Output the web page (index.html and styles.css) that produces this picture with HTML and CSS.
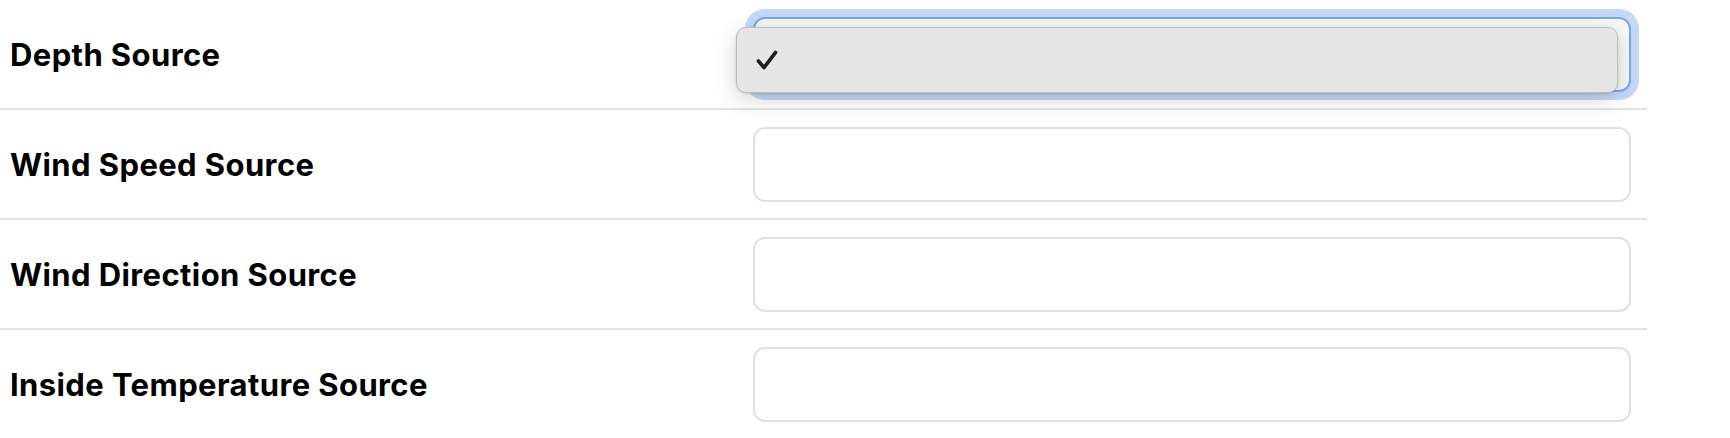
FILE: index.html
```html
<!DOCTYPE html>
<html>
<head>
<meta charset="utf-8">
<link rel="stylesheet" href="styles.css">
</head>
<body>
<div class="list">
  <div class="row">
    <div class="label">Depth Source</div>
    <div class="select is-open">
      <div class="popup">
        <svg class="check" width="22" height="22" viewBox="0 0 22 22"><path d="M2.4 12 L8 18.6 L19.6 3.4" fill="none" stroke="#1e1e1e" stroke-width="3.6" stroke-linecap="round" stroke-linejoin="round"/></svg>
      </div>
    </div>
  </div>
  <div class="row">
    <div class="label">Wind Speed Source</div>
    <div class="select"></div>
  </div>
  <div class="row">
    <div class="label">Wind Direction Source</div>
    <div class="select"></div>
  </div>
  <div class="row">
    <div class="label">Inside Temperature Source</div>
    <div class="select"></div>
  </div>
</div>
</body>
</html>
```
FILE: styles.css
```css
html, body {
  margin: 0;
  padding: 0;
  background: #fff;
}
body {
  font-family: "Inter", "Liberation Sans", sans-serif;
  color: #000;
}
.list {
  width: 1647px;
}
.row {
  display: flex;
  align-items: center;
  height: 108px;
  padding: 0 16px 0 10px;
  border-bottom: 2px solid #e0e2e5;
}
.row:last-child {
  border-bottom: none;
}
.label {
  flex: 1;
  font-size: 31px;
  font-weight: 700;
  letter-spacing: 0.4px;
  padding-top: 1px;
}
.select {
  position: relative;
  width: 874px;
  height: 71px;
  border: 2px solid #dfe1e4;
  border-radius: 12px;
  background: #fff;
}
.select.is-open {
  border-color: #78a7f3;
  background: #f7f7f7;
  box-shadow: 0 0 0 8px #c5d8f9;
}
.popup {
  position: absolute;
  left: -19px;
  top: 8px;
  width: 882px;
  height: 66px;
  background: #e6e6e6;
  border: 1px solid #bdbdbd;
  border-radius: 10px;
  box-shadow: 0 6px 22px rgba(0, 0, 0, 0.16), 0 1px 3px rgba(0, 0, 0, 0.12);
  display: flex;
  align-items: center;
  padding-left: 19px;
  box-sizing: border-box;
}
.check {
  display: block;
}
```
